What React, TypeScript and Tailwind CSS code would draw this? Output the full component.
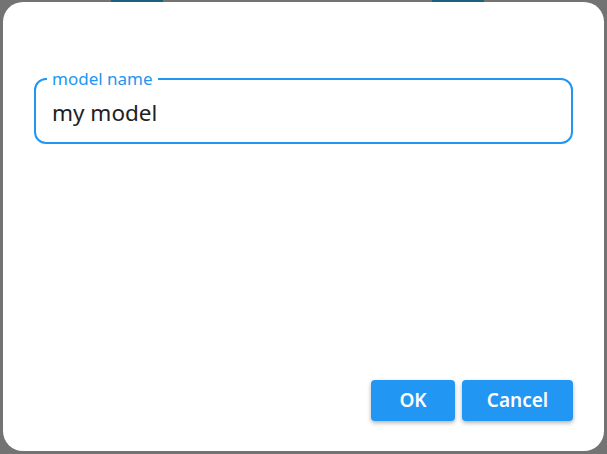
import React, { useState } from 'react';

export default function App() {
  const [name, setName] = useState('my model');
  return (
    <div className="w-[607px] h-[454px] bg-[#737373] flex flex-col overflow-hidden" style={{ fontFamily: '"Noto Sans", "Open Sans", sans-serif' }}>
      {/* bits of the page behind the dialog */}
      <div className="h-[2px] flex">
        <div className="w-[111px]" />
        <div className="w-[52px] bg-[#1d5f7e]" />
        <div className="w-[269px]" />
        <div className="w-[52px] bg-[#1d5f7e]" />
      </div>

      <div className="mx-[3px] h-[449px] bg-white rounded-[20px] flex flex-col px-[31px] pt-[68px] pb-[30px]">
        <fieldset className="border-[2.5px] border-[#2196F3] rounded-[12px] pl-[11px] pr-[16px] pb-[14px] m-0">
          <legend className="px-[5px] text-[17px] leading-[18px] text-[#2196F3]">model name</legend>
          <input
            value={name}
            onChange={(e) => setName(e.target.value)}
            className="w-full pl-[5px] pt-[10px] text-[22.5px] leading-[30px] text-[#222] outline-none bg-transparent" />
        </fieldset>

        <div className="flex-1" />

        <div className="flex justify-end gap-[7px]">
          <button className="w-[84px] h-[41px] rounded-[4px] bg-[#2196F3] text-white text-[19px] font-semibold shadow-[0_2px_4px_rgba(0,0,0,0.3)]">
            OK
          </button>
          <button className="w-[111px] h-[41px] rounded-[4px] bg-[#2196F3] text-white text-[19px] font-semibold shadow-[0_2px_4px_rgba(0,0,0,0.3)]">
            Cancel
          </button>
        </div>
      </div>
    </div>);
}
